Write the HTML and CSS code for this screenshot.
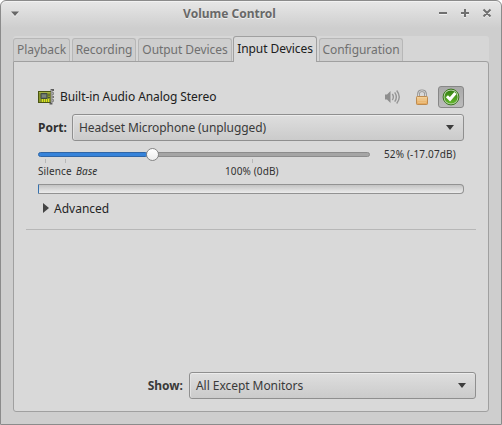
FILE: index.html
```html
<!DOCTYPE html>
<html lang="en">
<head>
<meta charset="utf-8">
<title>Volume Control</title>
<link rel="stylesheet" href="styles.css">
</head>
<body>
<div class="window">
  <header class="titlebar">
    <svg class="menu" width="10" height="8" viewBox="0 0 10 8"><path d="M1 2.5H9L5 7Z" fill="#f2f2f2"/><path d="M1 1.5H9L5 6Z" fill="#686868"/></svg>
    <h1 class="title">Volume Control</h1>
    <svg class="controls" width="54" height="12" viewBox="0 0 54 12" fill="none" stroke-width="2">
      <g stroke="#f0f0f0" transform="translate(0 1)"><path d="M1 6H9M23 6H31M27 2V10M45.5 2.5L52.5 9.5M52.5 2.5L45.5 9.5"/></g>
      <g stroke="#707070"><path d="M1 6H9M23 6H31M27 2V10M45.5 2.5L52.5 9.5M52.5 2.5L45.5 9.5"/></g>
    </svg>
  </header>
  <nav class="tabs">
    <div class="tab playback">Playback</div>
    <div class="tab recording">Recording</div>
    <div class="tab output">Output Devices</div>
    <div class="tab input active">Input Devices</div>
    <div class="tab config">Configuration</div>
  </nav>
  <main class="panel">
    <section class="device">
      <div class="device-head">
        <svg class="card" width="18" height="16" viewBox="0 0 18 16">
          <rect x=".5" y="2.5" width="13" height="11" fill="#8b972c" stroke="#4a5512"/>
          <path d="M1 3.5H13" stroke="#a7b349"/>
          <path d="M3 4.5H9V9.5H3Z" fill="#6b756c" stroke="#414b43"/><path d="M4 7H8" stroke="#8b948b"/>
          <path d="M10 6H12M10 8.5H12" stroke="#4d5830"/>
          <path d="M4.5 10V13M6.5 10V13M8.5 10V13M10.5 10V13" stroke="#dce817"/>
          <path d="M16 1H13.5V14.5H11.5M14 4.5H16M14 8H16M14 11.5H16" fill="none" stroke="#5c5c5c" stroke-width="1.8"/>
          <path d="M13.7 1V14M14 4.5H15.6M14 8H15.6M14 11.5H15.6" stroke="#bbb" stroke-width=".8"/>
        </svg>
        <span class="device-name">Built-in Audio Analog Stereo</span>
        <svg class="speaker" width="17" height="16" viewBox="0 0 17 16" fill="none" stroke="#969696">
          <path d="M1 5.5H3L6.5 2V14L3 10.5H1Z" fill="#8e8e8e" stroke="none"/><path d="M8.3 5Q10.5 8 8.3 11" stroke-width="1.4"/><path d="M10.7 3.3Q14 8 10.7 12.7" stroke-width="1.4"/><path d="M12.7 1.5Q17.8 8 12.7 14.5" stroke-width="1.4"/>
        </svg>
        <svg class="lock" width="14" height="16" viewBox="0 0 14 16">
          <defs><linearGradient id="gold" x2="0" y2="1"><stop stop-color="#f5d59f"/><stop offset="1" stop-color="#e4a557"/></linearGradient></defs>
          <path d="M3.5 8V4.8Q3.5 1.7 7 1.7T10.5 4.8V8" fill="none" stroke="#909090" stroke-width="2.6"/><path d="M3.5 8V4.8Q3.5 1.7 7 1.7T10.5 4.8V8" fill="none" stroke="#ddd" stroke-width=".9"/>
          <rect x="1.5" y="7.5" width="11" height="8" rx=".8" fill="url(#gold)" stroke="#bd8b50"/><path d="M3 9.5H11M3 11.5H11M3 13.5H11" stroke="#edc58d" stroke-width=".7"/>
        </svg>
        <div class="toggle">
          <svg width="18" height="18" viewBox="0 0 18 18">
            <defs><linearGradient id="green" x2="0" y2="1"><stop stop-color="#348012"/><stop offset="1" stop-color="#62b52b"/></linearGradient></defs>
            <circle cx="9" cy="9" r="7.9" fill="#c4d9b8" stroke="#397719" stroke-width="1"/><circle cx="9" cy="9" r="6.6" fill="url(#green)"/>
            <path d="M4.9 8.2L8 11.3L13.4 5" fill="none" stroke="#fff" stroke-width="3"/>
          </svg>
        </div>
      </div>
      <div class="port">
        <span class="port-label">Port:</span>
        <div class="combo"><span class="port-value">Headset Microphone (unplugged)</span><i class="arrow"></i></div>
      </div>
      <div class="volume">
        <div class="slider"><div class="fill"></div><div class="knob"></div><div class="rest"></div></div>
        <span class="volume-value">52% (-17.07dB)</span>
      </div>
      <div class="ticks"><i></i><i></i><i></i></div>
      <div class="marks"><span class="silence">Silence</span><em class="base">Base</em><span class="full">100% (0dB)</span></div>
      <div class="meter"></div>
      <div class="advanced"><svg width="6" height="10" viewBox="0 0 6 10"><path d="M0 0L6 5L0 10Z" fill="#444"/></svg><span class="advanced-label">Advanced</span></div>
    </section>
    <hr class="separator">
    <footer class="show">
      <span class="show-label">Show:</span>
      <div class="combo show-combo"><span class="show-value">All Except Monitors</span><i class="arrow"></i></div>
    </footer>
  </main>
</div>
</body>
</html>
```

FILE: styles.css
```css
* { box-sizing: border-box; }
html { background: #fff; }
body { margin: 0; font: 12px/18px "Noto Sans", sans-serif; color: #303030; }
svg { display: block; flex: none; }
span, em { white-space: nowrap; }
.window { width: 502px; height: 425px; border: 1px solid #8b8b8b; border-radius: 6px 6px 0 0; padding: 0 12px 12px; display: flex; flex-direction: column; background: linear-gradient(#e7e7e7, #cecece 27px); box-shadow: inset 0 1px #f2f2f2; }
.titlebar { height: 35px; flex: none; display: flex; align-items: flex-start; margin: 0 -3px 0 -2px; }
.menu { margin: 9px 0 0 -1px; }
.title { flex: 1; margin: 4px 0 0 1px; text-align: center; font-size: 12px; line-height: 18px; font-weight: 700; color: #686868; text-shadow: 0 1px #f0f0f0; }
.controls { margin: 6px 0 0; }
.tabs { height: 25px; flex: none; display: flex; align-items: flex-end; gap: 2px; background: #d6d6d6; border-radius: 3px 3px 0 0; }
.tab { height: 23px; border: 1px solid #b7b7b7; border-bottom: 0; border-radius: 3px 3px 0 0; background: #cecece; color: #707070; text-align: center; line-height: 22px; white-space: nowrap; letter-spacing: -.06px; }
.playback { width: 57px; }
.recording { width: 64px; }
.output { width: 94px; }
.config { width: 84px; }
.tab.active { height: 26px; margin: 0 0 -1px -1px; width: 84px; border-color: #a0a0a0; background: #d9d9d9; color: #202020; line-height: 24px; z-index: 1; }
.panel { flex: 1; width: 476px; border: 1px solid #a0a0a0; border-radius: 0 3px 3px 3px; background: #d9d9d9; padding: 24px 12px 12px; display: flex; flex-direction: column; }
.device { margin: 0 12px; height: 143px; }
.device-head { display: flex; align-items: center; height: 22px; }
.device-name { margin-left: 4px; flex: 1; color: #202020; letter-spacing: -.07px; }
.lock { margin-left: 14px; }
.toggle { width: 26px; height: 22px; margin-left: 9px; border: 1px solid #878787; border-radius: 3px; background: linear-gradient(#a9a9a9, #bcbcbc); display: grid; place-items: center; }
.port { display: flex; align-items: center; margin-top: 6px; }
.port-label { width: 34px; font-weight: 700; }
.combo { flex: 1; height: 27px; border: 1px solid #8f8f8f; border-radius: 3px; background: linear-gradient(#dedede, #cbcbcb); box-shadow: inset 0 1px #ececec, inset 1px 0 #e2e2e2; padding: 0 9px 0 6px; display: flex; align-items: center; justify-content: space-between; color: #3a3a3a; }
.port-value { letter-spacing: -.09px; }
.show-value { letter-spacing: -.05px; }
.arrow { width: 0; border: 4px solid transparent; border-top: 5px solid #3d3d3d; border-bottom: 0; }
.volume { height: 27px; display: flex; align-items: center; font-size: 10px; }
.slider { width: 332px; display: flex; align-items: center; }
.fill { width: 110px; height: 5px; border: 1px solid #2f66a6; background: #3683da; border-radius: 3px; }
.knob { width: 13px; height: 13px; margin: 0 -2px; border: 1px solid #858585; border-radius: 50%; background: linear-gradient(#fff, #ededed); z-index: 1; }
.rest { flex: 1; height: 5px; border: 1px solid #8c8c8c; background: #a5a5a5; border-radius: 0 3px 3px 0; }
.volume-value { margin: -1px 0 0 14px; letter-spacing: .15px; }
.ticks { height: 4px; margin-top: -9px; padding-left: 7px; display: flex; }
.ticks i { width: 1px; background: #b7b7b7; margin-right: 19px; }
.ticks i:nth-child(2) { margin-right: 186px; }
.marks { display: flex; height: 14px; margin-top: 1px; font-size: 10px; line-height: 14px; letter-spacing: .12px; }
.silence { width: 38px; }
.base { width: 149px; }
.meter { height: 10px; margin-top: 6px; border: 1px solid #929292; border-left: 1px solid #3471af; border-radius: 0 4px 4px 0; background: linear-gradient(#c3c3c3, #ececec); }
.advanced { display: flex; align-items: center; margin: 6px 0 0 5px; color: #252525; }
.advanced svg { margin-top: -2px; }
.advanced-label { margin-left: 5px; }
.separator { width: 450px; height: 1px; margin: 0; border: 0; background: #b7b7b7; flex: none; }
.show { margin-top: auto; display: flex; align-items: center; justify-content: flex-end; }
.show-label { font-weight: 700; margin-right: 6px; color: #3a3a3a; }
.show-combo { flex: none; width: 287px; }
```
